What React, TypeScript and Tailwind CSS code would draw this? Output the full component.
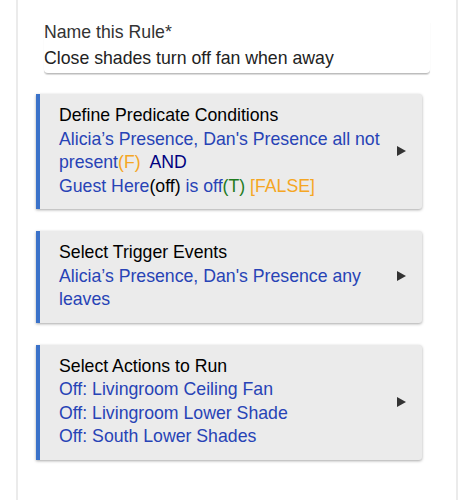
import React from "react";

const blue = "text-[#2743b6]";

function Arrow() {
  return (
    <svg width="9" height="10" viewBox="0 0 9 10" className="shrink-0">
      <polygon points="0,0 9,5 0,10" fill="#333" />
    </svg>
  );
}

function Section({ title, children }: { title: string; children: React.ReactNode }) {
  return (
    <div className="flex items-center w-[386px] bg-[#ebebeb] border-l-4 border-[#3b72c9] rounded-r-[3px] shadow-[0_1px_3px_rgba(0,0,0,0.35)] pl-[19px] pr-[16px] pt-[10px] pb-[11px]">
      <div className="flex-1 text-[17.7px] leading-[23.5px]">
        <div className="text-black">{title}</div>
        {children}
      </div>
      <Arrow />
    </div>
  );
}

export default function App() {
  return (
    <div className="w-[474px] h-[500px] bg-white overflow-hidden" style={{ fontFamily: '"Liberation Sans", Arial, sans-serif' }}>
      <div className="ml-[16px] w-[442px] h-full border-x-2 border-[#ebebeb] pl-[18px]">
        <div className="pt-[22px] ml-[8px] w-[386px]">
          <div className="rounded-b-[4px] border-b border-[#bdbdbd] shadow-[0_1px_1px_rgba(0,0,0,0.15)] pb-[3px]">
            <div className="text-[17.7px] leading-[21px] text-[#333]">Name this Rule*</div>
            <div className="mt-[3px] text-[17.7px] leading-[24px] text-[#222]">Close shades turn off fan when away</div>
          </div>
        </div>

        <div className="mt-[20px] flex flex-col gap-[22px]">
          <Section title="Define Predicate Conditions">
            <div className={blue}>Alicia’s Presence, Dan's Presence all not</div>
            <div className={blue}>
              present<span className="text-[#f5a623]">(F)</span>
              <span className="text-[#000080]">&nbsp; AND</span>
            </div>
            <div className={blue}>
              Guest Here<span className="text-black">(off)</span> is off
              <span className="text-[#1e7b1e]">(T)</span> <span className="text-[#f5a623]">[FALSE]</span>
            </div>
          </Section>

          <Section title="Select Trigger Events">
            <div className={blue}>Alicia’s Presence, Dan's Presence any</div>
            <div className={blue}>leaves</div>
          </Section>

          <Section title="Select Actions to Run">
            <div className={blue}>Off: Livingroom Ceiling Fan</div>
            <div className={blue}>Off: Livingroom Lower Shade</div>
            <div className={blue}>Off: South Lower Shades</div>
          </Section>
        </div>
      </div>
    </div>
  );
}
